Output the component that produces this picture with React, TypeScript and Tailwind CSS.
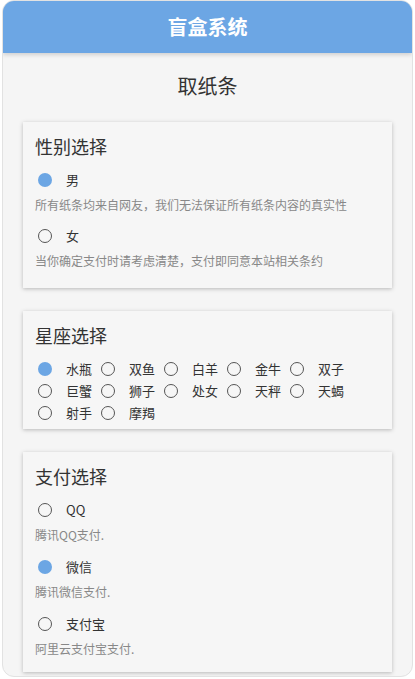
import React from "react";

const ZODIAC = ["水瓶", "双鱼", "白羊", "金牛", "双子", "巨蟹", "狮子", "处女", "天秤", "天蝎", "射手", "摩羯"];

const GENDERS = [
  { label: "男", desc: "所有纸条均来自网友，我们无法保证所有纸条内容的真实性", checked: true },
  { label: "女", desc: "当你确定支付时请考虑清楚，支付即同意本站相关条约", checked: false },
];

const PAYMENTS = [
  { label: "QQ", desc: "腾讯QQ支付.", checked: false },
  { label: "微信", desc: "腾讯微信支付.", checked: true },
  { label: "支付宝", desc: "阿里云支付宝支付.", checked: false },
];

function Radio({ checked }: { checked: boolean }) {
  return checked ? (
    <span className="ml-[3px] block h-[14px] w-[14px] shrink-0 rounded-full bg-[#6ca6e4]" />
  ) : (
    <span className="ml-[3px] block h-[14px] w-[14px] shrink-0 rounded-full border-[1.5px] border-[#555]" />
  );
}

function Card({ title, className, children }: { title: string; className: string; children: React.ReactNode }) {
  return (
    <section className={`mx-[20px] bg-[#f6f6f6] px-[12px] pt-[12px] shadow-[0_1px_4px_rgba(0,0,0,0.25)] ${className}`}>
      <h2 className="text-[18px] leading-[24px] text-[#333]">{title}</h2>
      {children}
    </section>
  );
}

function OptionList({ items, gap }: { items: typeof GENDERS; gap: string }) {
  return (
    <div className={`mt-[12px] flex flex-col ${gap}`}>
      {items.map((o) => (
        <div key={o.label}>
          <label className="flex h-[20px] items-center">
            <Radio checked={o.checked} />
            <span className="ml-[14px] text-[13px] text-[#333]">{o.label}</span>
          </label>
          <p className="mt-[7px] text-[12px] leading-[16px] text-[#888]">{o.desc}</p>
        </div>
      ))}
    </div>
  );
}

export default function App() {
  return (
    <div className="min-h-screen bg-white px-[2px] font-['Noto_Sans_CJK_SC','Noto_Sans',sans-serif]">
      <div className="flex h-[677px] flex-col overflow-hidden rounded-[12px] border border-[#e2e2e2] bg-[#f5f5f5]">
        {/* 顶部标题栏 */}
        <header className="relative z-10 flex h-[52px] shrink-0 items-center justify-center bg-[#6ca6e4] shadow-[0_2px_4px_rgba(0,0,0,0.15)]">
          <h1 className="text-[20px] font-bold text-white">盲盒系统</h1>
        </header>

        <p className="mt-[19px] text-center text-[20px] leading-[28px] text-[#333]">取纸条</p>

        <Card title="性别选择" className="mt-[22px] pb-[19px]">
          <OptionList items={GENDERS} gap="gap-[13px]" />
        </Card>

        <Card title="星座选择" className="mt-[23px] pb-[5px]">
          <div className="mt-[11px] flex flex-wrap">
            {ZODIAC.map((z, i) => (
              <label key={z} className="flex h-[22px] items-center">
                <Radio checked={i === 0} />
                <span className="ml-[14px] mr-[6px] text-[13px] text-[#333]">{z}</span>
              </label>
            ))}
          </div>
        </Card>

        <Card title="支付选择" className="mt-[23px] shrink-0 pb-[15px]">
          <OptionList items={PAYMENTS} gap="gap-[14px]" />
        </Card>
      </div>
    </div>
  );
}
